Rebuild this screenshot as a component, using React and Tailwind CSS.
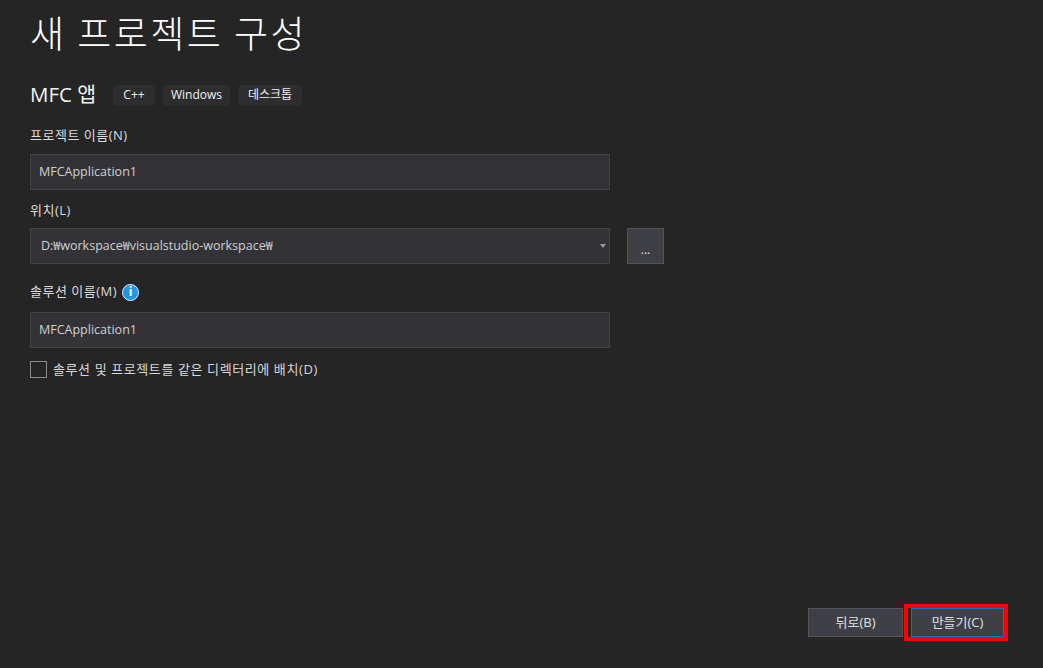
import React from "react";

const Tag = ({ width, children }) => (
  <span className={`${width} h-[21px] flex items-center justify-center rounded-[4px] bg-[#2d2d30] text-[12px] text-[#f1f1f1]`}>{children}</span>
);

const Label = ({ children }) => <div className="text-[13px] leading-[16px] tracking-[0.5px] text-[#dcdcdc]">{children}</div>;

const Field = ({ children }) => (
  <div className="w-[580px] h-[36px] flex items-center pl-[8px] bg-[#333337] border border-[#434346] text-[12.5px] text-[#d0d0d0]">{children}</div>
);

const App = () => {
  return (
    <div className="w-[1043px] h-[668px] overflow-hidden bg-[#252526] flex flex-col pl-[30px] font-['Open_Sans','Noto_Sans_CJK_KR',sans-serif]">
      <h1 className="mt-[7px] h-[50px] text-[37px] leading-[50px] tracking-[2.5px] font-light text-white font-['Noto_Sans_CJK_KR',sans-serif]">새 프로젝트 구성</h1>

      <div className="mt-[24px] h-[26px] flex items-center">
        <span className="text-[20.5px] text-[#f1f1f1] w-[83px]">MFC 앱</span>
        <div className="flex gap-[8px] mt-[2px]">
          <Tag width="w-[42px]">C++</Tag>
          <Tag width="w-[67px]">Windows</Tag>
          <Tag width="w-[64px]">데스크톱</Tag>
        </div>
      </div>

      <div className="mt-[20px]">
        <Label>프로젝트 이름(N)</Label>
      </div>
      <div className="mt-[11px]">
        <Field>MFCApplication1</Field>
      </div>

      <div className="mt-[12px]">
        <Label>위치(L)</Label>
      </div>
      <div className="mt-[10px] flex gap-[17px]">
        <div className="w-[580px] h-[36px] flex items-center justify-between pl-[10px] pr-[3px] bg-[#333337] border border-[#434346] text-[12.5px] text-[#d0d0d0]">
          <span>D:₩workspace₩visualstudio-workspace₩</span>
          <svg width="6" height="4" viewBox="0 0 6 4"><path d="M0 0h6L3 4z" fill="#999999" /></svg>
        </div>
        <button className="w-[37px] h-[36px] bg-[#3f3f46] border border-[#54545c] text-[12px] text-[#e0e0e0] pt-[8px]">...</button>
      </div>

      <div className="mt-[18px] h-[20px] flex items-center gap-[5px]">
        <div className="mb-[2px]">
          <Label>솔루션 이름(M)</Label>
        </div>
        <span className="w-[17px] h-[17px] rounded-full bg-[#1c97ea] border border-[#e6f2fb] flex items-center justify-center text-[12px] font-bold text-white leading-none">i</span>
      </div>
      <div className="mt-[10px]">
        <Field>MFCApplication1</Field>
      </div>

      <div className="mt-[12px] flex items-center gap-[6px]">
        <span className="w-[17px] h-[17px] border border-[#8a8a8a] bg-transparent"></span>
        <span className="text-[13px] tracking-[0.6px] text-[#d8d8d8]">솔루션 및 프로젝트를 같은 디렉터리에 배치(D)</span>
      </div>

      <div className="mt-auto mb-[27px] mr-[35px] flex justify-end items-center gap-[1px]">
        <button className="w-[95px] h-[29px] bg-[#3f3f46] border border-[#54545c] text-[13px] text-[#e0e0e0]">뒤로(B)</button>
        <div className="w-[104px] h-[37px] border-[4px] border-[#ff0000] flex justify-end">
          <button className="w-[93px] h-[29px] bg-[#3f3f46] border border-[#007acc] text-[13px] text-[#e0e0e0]">만들기(C)</button>
        </div>
      </div>
    </div>
  );
};

export default App;
